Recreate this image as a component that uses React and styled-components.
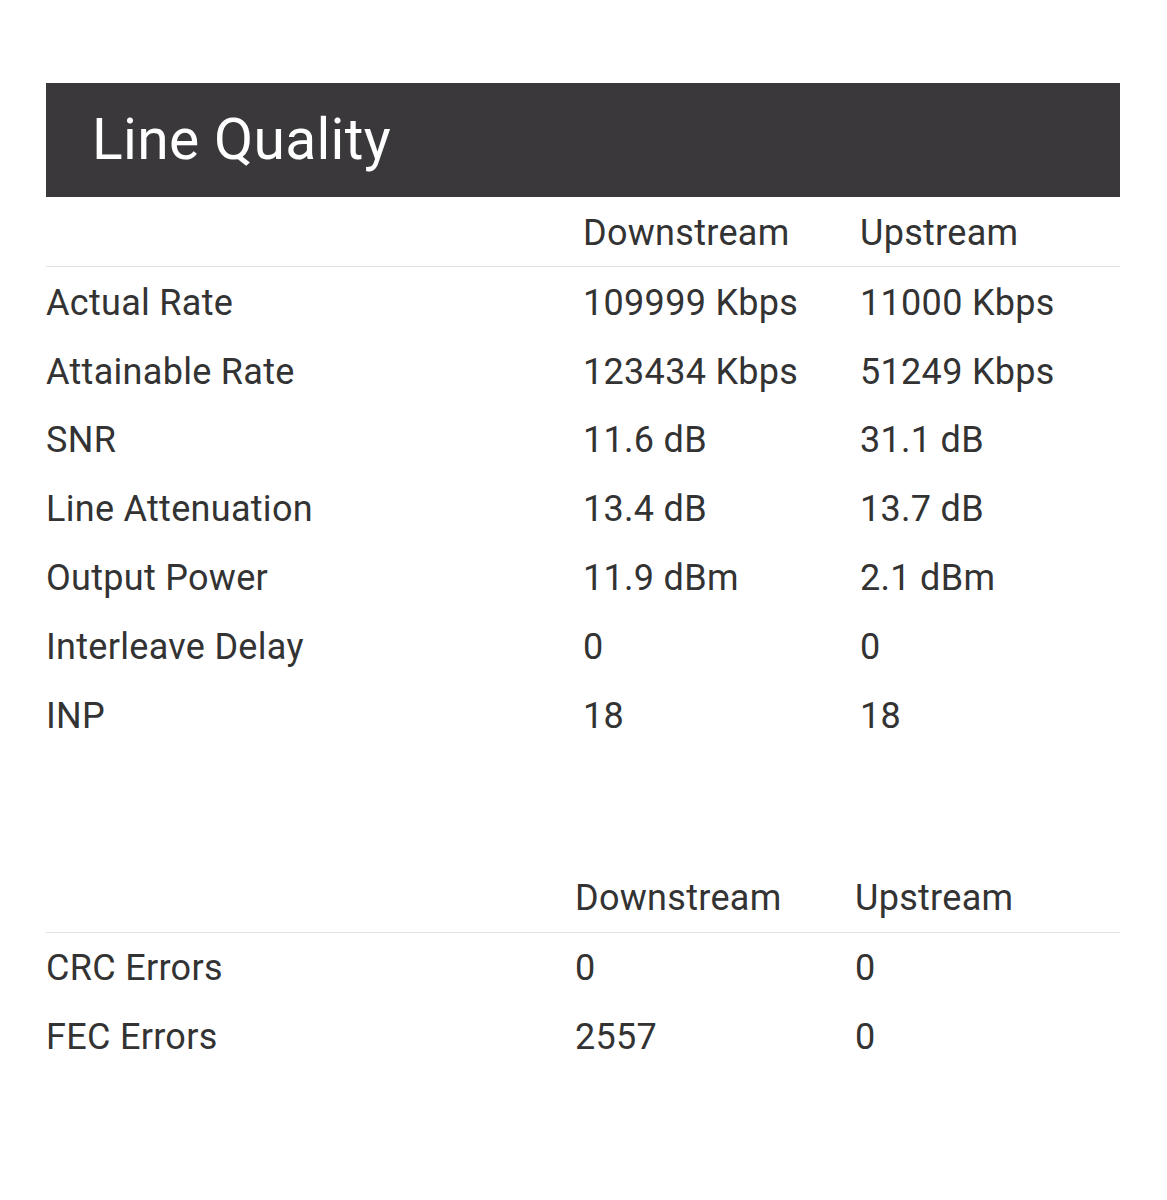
import React from 'react';
import styled, {createGlobalStyle} from 'styled-components';

const GlobalStyle = createGlobalStyle`
    *, *::before, *::after {
        box-sizing: border-box;
    }
    body {
        margin: 0;
        background: #ffffff;
        font-family: Roboto, "Noto Sans", sans-serif;
        color: #333333;
    }
`;

const Page = styled.div`
    padding: 83px 47px 0 46px;
`;

const TitleBar = styled.div`
    background-color: #3a383b;
    height: 114px;
    display: flex;
    align-items: center;
    padding-left: 46px;
`;

const Title = styled.h1`
    margin: 0;
    font-size: 57px;
    font-weight: 400;
    letter-spacing: 0.3px;
    color: #ffffff;
    padding-bottom: 2px;
`;

const Table = styled.div`
    display: grid;
    grid-template-columns: ${props => props.cols};
    margin-top: ${props => props.top}px;
`;

const HeadCell = styled.div`
    height: 70px;
    display: flex;
    align-items: center;
    font-size: 36px;
    letter-spacing: 0.3px;
    padding-top: 2px;
    border-bottom: 1px solid #e2e2e2;
`;

const Cell = styled.div`
    height: 68.8px;
    display: flex;
    align-items: center;
    font-size: 36px;
    letter-spacing: 0.3px;
    padding-top: 3px;
`;

const lineRows = [
    ['Actual Rate', '109999 Kbps', '11000 Kbps'],
    ['Attainable Rate', '123434 Kbps', '51249 Kbps'],
    ['SNR', '11.6 dB', '31.1 dB'],
    ['Line Attenuation', '13.4 dB', '13.7 dB'],
    ['Output Power', '11.9 dBm', '2.1 dBm'],
    ['Interleave Delay', '0', '0'],
    ['INP', '18', '18'],
];

const errorRows = [
    ['CRC Errors', '0', '0'],
    ['FEC Errors', '2557', '0'],
];

const StatsTable = ({rows, cols, top}) => (
    <Table cols={cols} top={top}>
        <HeadCell />
        <HeadCell>Downstream</HeadCell>
        <HeadCell>Upstream</HeadCell>
        {rows.map(row => row.map((v, i) => <Cell key={row[0] + i}>{v}</Cell>))}
    </Table>
);

export default function App() {
    return (
        <Page>
            <GlobalStyle />
            <TitleBar>
                <Title>Line Quality</Title>
            </TitleBar>
            <StatsTable rows={lineRows} cols="537px 277px 1fr" top={0} />
            <StatsTable rows={errorRows} cols="529px 280px 1fr" top={114} />
        </Page>
    );
}
